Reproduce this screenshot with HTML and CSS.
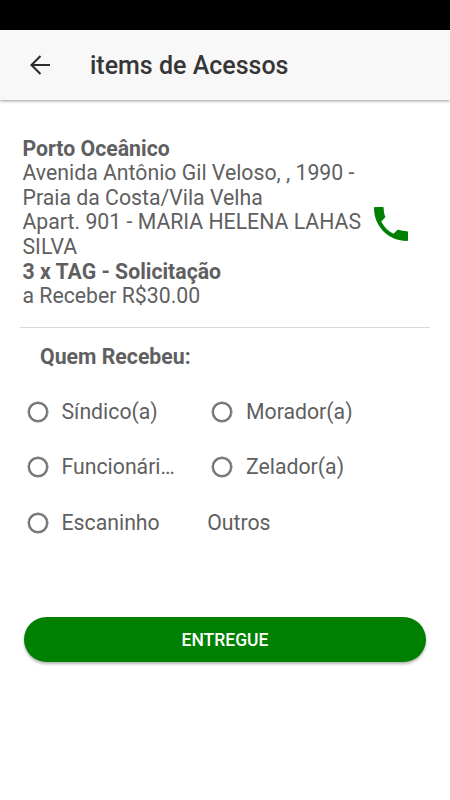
FILE: index.html
```html
<!DOCTYPE html>
<html lang="pt-BR">
<head>
<meta charset="utf-8">
<title>items de Acessos</title>
<link rel="stylesheet" href="styles.css">
</head>
<body>
<div class="status"></div>
<header class="toolbar">
  <svg class="back" viewBox="0 0 20 20"><path d="M20 10H1.5M10.5 1L1.5 10L10.5 19"/></svg>
  <h1>items de Acessos</h1>
</header>
<main>
  <section class="item">
    <div class="info">
      <p><b>Porto Oceânico</b></p>
      <p>Avenida Antônio Gil Veloso, , 1990 -<br>Praia da Costa/Vila Velha</p>
      <p>Apart. 901 - MARIA HELENA LAHAS<br>SILVA</p>
      <p><b>3 x TAG - Solicitação</b></p>
      <p>a Receber R$30.00</p>
    </div>
    <svg class="phone" viewBox="0 0 34 34"><path d="M1 0H8.7Q9.6 0 9.7 1C9.7 4.500 10.300 7.200 11.200 9.500Q11.400 10.200 10.900 10.700L7.200 14.500C10 20 14 24 19.500 26.800L23.300 23Q23.800 22.500 24.500 22.800C27 23.700 29.800 24.200 33 24.200Q34 24.300 34 25.200V33Q34 34 33 34C14.500 34 0 19.500 0 1Q0 0 1 0Z"/></svg>
  </section>
  <h2>Quem Recebeu:</h2>
  <div class="options">
    <label><i></i><span>Síndico(a)</span></label>
    <label><i></i><span>Morador(a)</span></label>
    <label><i></i><span>Funcionári…</span></label>
    <label><i></i><span>Zelador(a)</span></label>
    <label><i></i><span>Escaninho</span></label>
    <div class="other">Outros</div>
  </div>
  <button>ENTREGUE</button>
</main>
</body>
</html>
```
FILE: styles.css
```css
* { box-sizing: border-box; }
body { margin: 0; height: 800px; overflow: hidden; background: #fff; font-family: Roboto, sans-serif; color: #5f5f61; font-size: 21.25px; }
.status { height: 30px; background: #000; }
.toolbar { height: 70px; background: #f8f8f8; display: flex; align-items: center; padding-left: 30px; box-shadow: 0 1px 3px rgba(0,0,0,.4); }
.back { width: 20px; height: 20px; fill: none; stroke: #2c2c2c; stroke-width: 2.1; }
h1 { margin: 0 0 0 40px; font-size: 25px; font-weight: 500; color: #363636; white-space: nowrap; }
main { padding: 36px 20px 0; }
.item { display: flex; height: 192px; border-bottom: 1px solid #d8d8d8; }
.info { width: 350px; padding: .6px 0 0 2.5px; line-height: 24.6px; white-space: nowrap; }
p { margin: 0; }
.phone { width: 34px; height: 34px; margin: 71px 0 0 3.7px; fill: #008000; flex: none; }
h2 { margin: 14px 0 0 20px; font-size: 21.25px; line-height: 29px; font-weight: 700; }
.options { display: grid; grid-template-columns: 184.5px 185px; grid-template-rows: 55px 55px 56px; margin: 13px 0 0 7.5px; }
label { display: flex; align-items: center; }
label i { width: 20px; height: 20px; border: 2.5px solid #707070; border-radius: 50%; margin: 1px 14px 0 0; flex: none; box-shadow: 0 0 0 .5px #707070; }
label span { white-space: nowrap; }
.other { align-self: center; margin-left: -4.8px; }
button { display: block; width: 402px; height: 45px; margin: 67px 0 0 4px; border: 0; border-radius: 23px; background: #008000; color: #fff; font: 500 17.5px Roboto, sans-serif; box-shadow: 0 2px 3px rgba(0,0,0,.3); }
```
